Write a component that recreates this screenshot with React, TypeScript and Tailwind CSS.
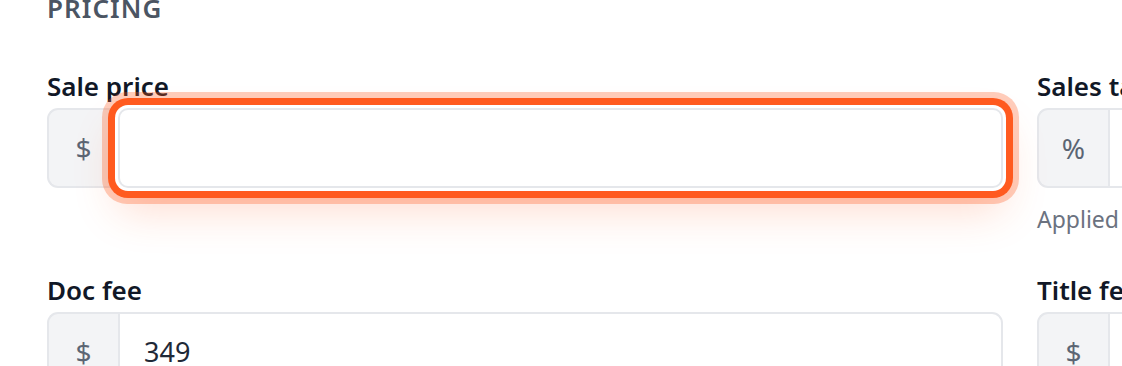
import { ReactNode } from 'react';

type FieldProps = {
  label: string;
  prefix: string;
  value?: string;
  help?: string;
  focused?: boolean;
};

function Field({ label, prefix, value, help, focused }: FieldProps) {
  return (
    <div className="flex flex-col">
      <label className="mb-[9px] text-[26px] leading-[26px] font-semibold text-[#111827]">{label}</label>
      <div className="flex h-[80px]">
        <span className="flex w-[71px] shrink-0 items-center justify-center rounded-l-[11px] border-2 border-r-0 border-[#e5e7eb] bg-[#f3f4f6] text-[28px] text-[#5b6573]">
          {prefix}
        </span>
        {focused ? (
          <input
            defaultValue={value}
            className="relative z-10 min-w-0 flex-1 rounded-[10px] border-2 border-[#e5e7eb] bg-white px-[24px] text-[27px] text-[#1f2937] outline-none shadow-[0_0_0_3px_#ffffff,0_0_0_10px_#ff5a1f,0_0_0_16px_rgba(255,90,31,0.3),0_22px_44px_rgba(255,90,31,0.22)]"
          />
        ) : (
          <input
            defaultValue={value}
            className="min-w-0 flex-1 rounded-r-[11px] border-2 border-[#e5e7eb] bg-white px-[24px] text-[27px] text-[#1f2937] outline-none"
          />
        )}
      </div>
      {help && <p className="mt-[20px] text-[23px] leading-[23px] text-[#6b7280]">{help}</p>}
    </div>
  );
}

function Section({ title, children }: { title: string; children: ReactNode }) {
  return (
    <section>
      <h2 className="-mt-[5px] text-[26px] leading-[26px] font-semibold tracking-[0.04em] text-[#4b5563] uppercase">
        {title}
      </h2>
      {children}
    </section>
  );
}

export default function App() {
  return (
    <div className="h-[366px] w-[1122px] overflow-hidden bg-white pl-[47px] font-['Noto_Sans',sans-serif]">
      <Section title="Pricing">
        <div className="mt-[52px] grid w-[1946px] grid-cols-[956px_956px] gap-x-[34px] gap-y-[46px]">
          <Field label="Sale price" prefix="$" focused />
          <Field label="Sales tax" prefix="%" value="7.25" help="Applied to sale price and fees" />
          <Field label="Doc fee" prefix="$" value="349" />
          <Field label="Title fee" prefix="$" value="85" />
        </div>
      </Section>
    </div>
  );
}
